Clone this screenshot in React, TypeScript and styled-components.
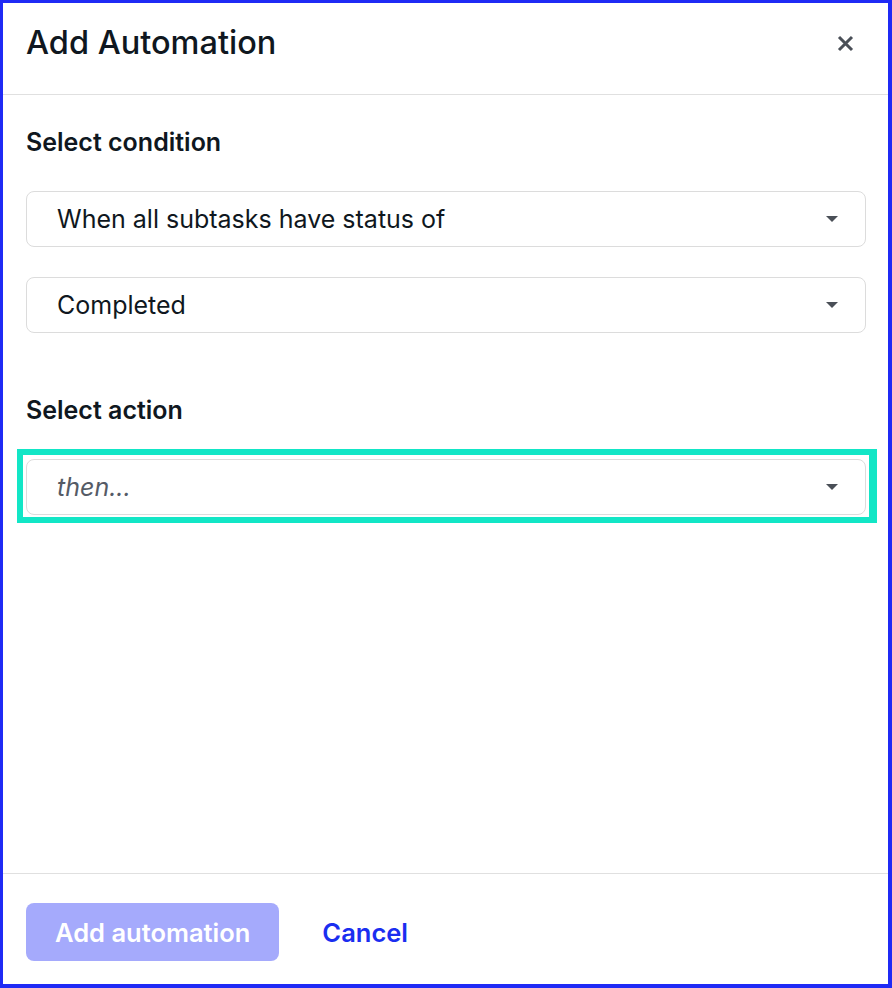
import React from 'react'
import styled, {createGlobalStyle} from 'styled-components'

const GlobalStyle = createGlobalStyle`
    html, body {
        margin: 0;
        padding: 0;
        background: #ffffff;
    }
    body {
        font-family: Inter, "Noto Sans", sans-serif;
        color: #0f1720;
    }
`

const colors = {
    frame: '#1f2af5',
    text: '#0f1720',
    muted: '#555b66',
    icon: '#4a4f57',
    line: '#e0e0e0',
    fieldBorder: '#dcdcdc',
    focus: '#12e6c6',
    primaryDisabled: '#a5aafc',
    link: '#1a2ef0',
}

type SelectProps = {
    value: string
    placeholder?: boolean
    focused?: boolean
}

const Select = ({value, placeholder, focused}: SelectProps) => (
    <FocusRing focused={!!focused}>
        <Field>
            <FieldText $placeholder={!!placeholder}>{value}</FieldText>
            <Caret viewBox="0 0 12 6">
                <path d="M0 0h12L6 6z" fill={colors.icon}/>
            </Caret>
        </Field>
    </FocusRing>
)

export default function App() {
    return (
        <>
            <GlobalStyle/>
            <Dialog>
                <Header>
                    <Title>Add Automation</Title>
                    <CloseButton aria-label="Close">
                        <svg width="17" height="17" viewBox="0 0 17 17">
                            <path d="M2 2l13 13M15 2L2 15" stroke={colors.icon} strokeWidth="3"/>
                        </svg>
                    </CloseButton>
                </Header>
                <Body>
                    <Section>
                        <Label>Select condition</Label>
                        <Fields>
                            <Select value="When all subtasks have status of"/>
                            <Select value="Completed"/>
                        </Fields>
                    </Section>
                    <Section>
                        <Label>Select action</Label>
                        <Select value="then..." placeholder focused/>
                    </Section>
                </Body>
                <Footer>
                    <PrimaryButton disabled>Add automation</PrimaryButton>
                    <LinkButton>Cancel</LinkButton>
                </Footer>
            </Dialog>
        </>
    )
}

const Dialog = styled.div`
    box-sizing: border-box;
    width: 892px;
    height: 988px;
    display: flex;
    flex-direction: column;
    border-style: solid;
    border-color: ${colors.frame};
    border-width: 3px 4px 4px 3px;
    background: #fff;
`

const Header = styled.div`
    box-sizing: border-box;
    display: flex;
    align-items: center;
    justify-content: space-between;
    height: 92px;
    padding: 0 34px 11px 23px;
    border-bottom: 1px solid ${colors.line};
`

const Title = styled.h1`
    margin: 0;
    font-size: 32.5px;
    font-weight: 500;
    line-height: 40px;
    color: ${colors.text};
`

const CloseButton = styled.button`
    border: none;
    background: none;
    padding: 0;
    display: flex;
    cursor: pointer;
`

const Body = styled.div`
    flex: 1;
    display: flex;
    flex-direction: column;
    gap: 62px;
    padding: 32px 22px 0 23px;
`

const Section = styled.div`
    display: flex;
    flex-direction: column;
    gap: 34px;
`

const Fields = styled.div`
    display: flex;
    flex-direction: column;
    gap: 30px;
`

const Label = styled.div`
    font-size: 25px;
    font-weight: 600;
    line-height: 30px;
    color: ${colors.text};
`

const FocusRing = styled.div<{focused: boolean}>`
    ${({focused}) => focused ? `
        margin: -10px -11px -8px -9px;
        padding: 4px 3px 2px 3px;
        border: 6px solid ${colors.focus};
        border-right-width: 8px;
    ` : ''}
`

const Field = styled.div`
    box-sizing: border-box;
    height: 56px;
    display: flex;
    align-items: center;
    justify-content: space-between;
    padding: 0 27px 0 30px;
    border: 1px solid ${colors.fieldBorder};
    border-radius: 8px;
    background: #fff;
    cursor: pointer;
`

const FieldText = styled.span<{$placeholder: boolean}>`
    font-size: 25px;
    color: ${({$placeholder}) => $placeholder ? colors.muted : colors.text};
    font-style: ${({$placeholder}) => $placeholder ? 'italic' : 'normal'};
`

const Caret = styled.svg`
    width: 12px;
    height: 6px;
`

const Footer = styled.div`
    display: flex;
    align-items: center;
    gap: 43px;
    padding: 29px 23px 23px;
    border-top: 1px solid ${colors.line};
`

const PrimaryButton = styled.button`
    height: 58px;
    padding: 0 29px;
    border: none;
    border-radius: 8px;
    background: ${colors.primaryDisabled};
    color: #fff;
    font-family: Inter, "Noto Sans", sans-serif;
    font-size: 25.5px;
    font-weight: 600;
    cursor: not-allowed;
`

const LinkButton = styled.button`
    border: none;
    background: none;
    padding: 0;
    color: ${colors.link};
    font-family: Inter, "Noto Sans", sans-serif;
    font-size: 25.5px;
    font-weight: 600;
    cursor: pointer;
`
